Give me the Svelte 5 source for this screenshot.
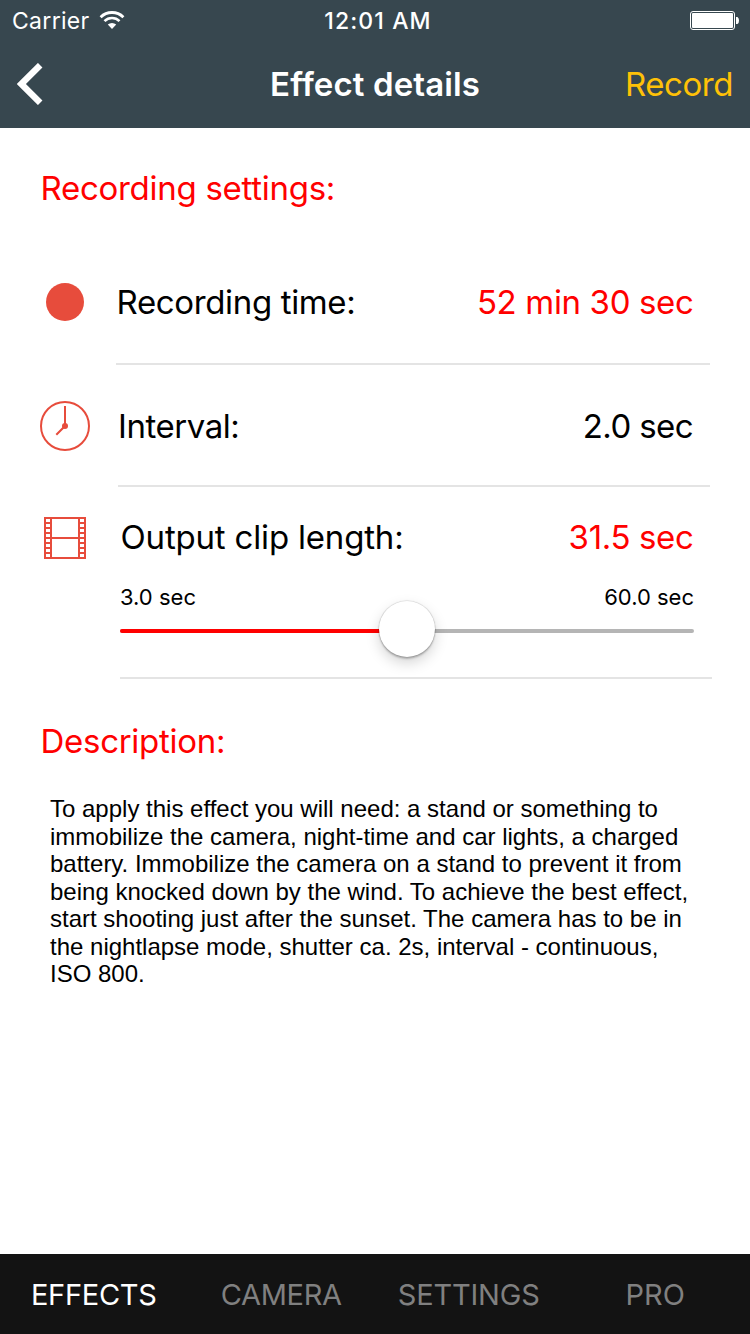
<script>
  let tabs = ['EFFECTS', 'CAMERA', 'SETTINGS', 'PRO'];
  let active = $state('EFFECTS');
  const min = 3;
  const max = 60;
  let clip = $state(31.5);
  let percent = $derived(((clip - min) / (max - min)) * 100);
  const holes = [2, 7, 12, 17, 22, 27, 32, 37];
</script>

<div class="screen">
  <header>
    <div class="status">
      <div class="carrier">
        <span>Carrier</span>
        <svg class="wifi" width="26" height="18" viewBox="0 0 26 18">
          <path d="M1.6 6.2A16.2 16.2 0 0 1 24.4 6.2" fill="none" stroke="#fff" stroke-width="2.8" />
          <path d="M5.5 10.1A10.7 10.7 0 0 1 20.5 10.1" fill="none" stroke="#fff" stroke-width="2.6" />
          <path d="M13 18L8.8 13.6A6.2 6.2 0 0 1 17.2 13.6Z" fill="#fff" />
        </svg>
      </div>
      <span class="clock">12:01 AM</span>
      <svg class="battery" width="49" height="19" viewBox="0 0 49 19">
        <rect x="0.5" y="0.5" width="44" height="18" rx="2.5" fill="none" stroke="#fff" />
        <rect x="2" y="2" width="41" height="15" rx="1" fill="#fff" />
        <path d="M46 6h1.5q1.5 1 1.5 3.5t-1.5 3.5H46z" fill="#fff" />
      </svg>
    </div>
    <nav>
      <button class="back" aria-label="Back">
        <svg width="27" height="42" viewBox="0 0 27 42">
          <path d="M23.2 2.2L4.4 21L23.2 39.8" fill="none" stroke="#fff" stroke-width="6.4" />
        </svg>
      </button>
      <h1>Effect details</h1>
      <button class="record">Record</button>
    </nav>
  </header>

  <main>
    <h2 class="h-settings">Recording settings:</h2>

    <section class="row time">
      <div class="icon"><span class="dot"></span></div>
      <div class="body">
        <span class="label">Recording time:</span>
        <span class="value red">52 min 30 sec</span>
      </div>
    </section>

    <section class="row interval">
      <div class="icon">
        <svg width="50" height="50" viewBox="0 0 50 50" fill="none" stroke="#e74c3c" stroke-width="2">
          <circle cx="25" cy="25" r="24" />
          <path d="M25 5V25L16.3 33.7" />
          <circle cx="25" cy="25" r="3" fill="#e74c3c" stroke="none" />
        </svg>
      </div>
      <div class="body">
        <span class="label">Interval:</span>
        <span class="value">2.0 sec</span>
      </div>
    </section>

    <section class="row clip">
      <div class="icon">
        <svg width="42" height="42" viewBox="0 0 42 42">
          <rect width="42" height="42" fill="#e74c3c" />
          <rect x="8" y="2" width="26" height="18" fill="#fff" />
          <rect x="8" y="22" width="26" height="18" fill="#fff" />
          {#each holes as y}
            <rect x="2" {y} width="4" height="3" fill="#fff" />
            <rect x="36" {y} width="4" height="3" fill="#fff" />
          {/each}
        </svg>
      </div>
      <div class="body">
        <div class="line">
          <span class="label">Output clip length:</span>
          <span class="value red">{clip.toFixed(1)} sec</span>
        </div>
        <div class="range">
          <span>{min.toFixed(1)} sec</span>
          <span>{max.toFixed(1)} sec</span>
        </div>
        <div class="track">
          <div class="fill" style="width: {percent}%"></div>
          <div class="thumb" style="left: {percent}%"></div>
        </div>
      </div>
    </section>

    <h2 class="h-description">Description:</h2>
    <p>
      To apply this effect you will need: a stand or something to<br />
      immobilize the camera, night-time and car lights, a charged<br />
      battery. Immobilize the camera on a stand to prevent it from<br />
      being knocked down by the wind. To achieve the best effect,<br />
      start shooting just after the sunset. The camera has to be in<br />
      the nightlapse mode, shutter ca. 2s, interval - continuous,<br />
      ISO 800.
    </p>
  </main>

  <footer>
    {#each tabs as tab}
      <button class="tab {tab.toLowerCase()}" class:active={tab === active} onclick={() => (active = tab)}>{tab}</button>
    {/each}
  </footer>
</div>

<style>
  :global(body) {
    margin: 0;
    background: #fff;
  }
  .screen {
    width: 750px;
    height: 1334px;
    display: flex;
    flex-direction: column;
    overflow: hidden;
    background: #fff;
    color: #000;
    font-family: Inter, 'Liberation Sans', sans-serif;
    font-size: 33px;
    line-height: 40px;
    white-space: nowrap;
  }
  button {
    border: 0;
    padding: 0;
    background: none;
    color: inherit;
    font: inherit;
    letter-spacing: inherit;
  }
  svg {
    display: block;
  }
  header {
    height: 128px;
    background: #37474f;
    color: #fff;
  }
  .status {
    height: 41px;
    display: grid;
    grid-template-columns: 1fr auto 1fr;
    align-items: center;
    padding: 0 11px 0 12px;
    box-sizing: border-box;
    font-size: 23px;
  }
  .carrier {
    display: flex;
    align-items: center;
    gap: 9px;
    letter-spacing: 0.3px;
  }
  .wifi {
    margin-bottom: 1px;
  }
  .clock {
    font-weight: 500;
    letter-spacing: 1.1px;
    padding-left: 5px;
  }
  .battery {
    justify-self: end;
  }
  nav {
    height: 86px;
    display: grid;
    grid-template-columns: 1fr auto 1fr;
    align-items: center;
    padding: 0 17px;
  }
  .back {
    justify-self: start;
  }
  h1,
  h2 {
    margin: 0;
    font-size: inherit;
  }
  h1 {
    font-weight: 600;
    letter-spacing: 0.1px;
  }
  .record {
    justify-self: end;
    color: #ffc107;
    letter-spacing: -0.45px;
  }
  h2 {
    color: #f00;
    font-weight: 400;
    padding-left: 40.5px;
    letter-spacing: -0.28px;
  }
  .h-settings {
    margin: 40px 0 33px;
  }
  .row {
    display: flex;
  }
  .icon {
    flex: none;
    width: 130px;
    display: flex;
    align-items: center;
    justify-content: center;
  }
  .dot {
    width: 38px;
    height: 38px;
    border-radius: 50%;
    background: #e74c3c;
  }
  .body {
    flex: 1;
    border-bottom: 2px solid #e4e4e4;
    display: flex;
    align-items: center;
    justify-content: space-between;
  }
  .label {
    letter-spacing: -0.35px;
    padding-left: 0.5px;
  }
  .value {
    letter-spacing: -0.35px;
  }
  .red {
    color: #f00;
  }
  .time .icon,
  .time .body {
    height: 122px;
  }
  .time .body {
    margin: 0 40px 0 -14px;
    padding-right: 16.5px;
  }
  .interval .icon,
  .interval .body {
    height: 118px;
    padding-top: 2px;
  }
  .interval .body {
    margin: 0 40px 0 -12px;
    padding-right: 17px;
  }
  .interval .label {
    letter-spacing: -0.45px;
    padding-left: 0;
  }
  .interval .value {
    letter-spacing: -0.6px;
  }
  .clip .icon {
    height: 102px;
  }
  .clip .body {
    display: block;
    height: 190px;
    margin: 0 38px 0 -10px;
    padding-right: 18px;
  }
  .clip .label {
    letter-spacing: -0.18px;
  }
  .clip .value {
    padding-right: 0.5px;
  }
  .line,
  .range {
    display: flex;
    justify-content: space-between;
    align-items: center;
  }
  .line {
    height: 100px;
  }
  .range {
    height: 18px;
    font-size: 22px;
    margin: 1px 0 23px;
  }
  .track {
    position: relative;
    height: 4px;
    border-radius: 2px;
    background: #b5b5b5;
  }
  .fill {
    height: 4px;
    border-radius: 2px 0 0 2px;
    background: #f00;
  }
  .thumb {
    position: absolute;
    top: -28px;
    width: 56px;
    height: 56px;
    margin-left: -28px;
    border-radius: 50%;
    background: #fff;
    box-shadow:
      0 0 1px 0.5px rgba(0, 0, 0, 0.16),
      0 2px 2px rgba(0, 0, 0, 0.22),
      0 6px 14px rgba(0, 0, 0, 0.17);
  }
  .h-description {
    margin: 42px 0 34px;
  }
  p {
    margin: 0 0 0 50px;
    font-family: 'Liberation Sans', Arial, sans-serif;
    font-size: 24px;
    line-height: 27.5px;
  }
  main {
    flex: 1;
    min-height: 0;
    display: flow-root;
  }
  footer {
    height: 80px;
    display: grid;
    grid-template-columns: repeat(4, 1fr);
    background: #131313;
    color: #808080;
    font-size: 29px;
    letter-spacing: -0.3px;
  }
  .tab {
    padding-top: 2px;
  }
  .tab.settings {
    letter-spacing: -0.2px;
  }
  .tab.pro {
    padding-right: 2px;
    letter-spacing: 0;
  }
  .tab.active {
    color: #fff;
  }
</style>
